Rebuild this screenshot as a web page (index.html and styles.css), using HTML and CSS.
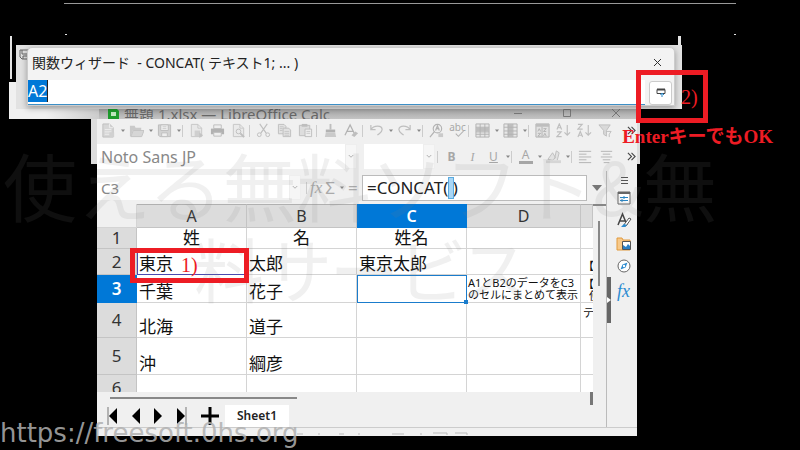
FILE: index.html
```html
<!DOCTYPE html>
<html lang="ja">
<head>
<meta charset="utf-8">
<title>関数ウィザード - LibreOffice Calc</title>
<link rel="stylesheet" href="styles.css">
</head>
<body>
<svg class="defs" aria-hidden="true">
  <symbol id="new" viewBox="0 0 16 16"><path d="M2 1h7l4 4v10H2z" fill="#ccc" stroke="#aaa"/><path d="M9 1v4h4M4 7h7M4 9.500h7M4 12h5" stroke="#eee" fill="none"/><path d="M9 10h5v5H9z" fill="#c4c4c4"/></symbol>
  <symbol id="open" viewBox="0 0 16 16"><path d="M1 3h5l1 2h6v3H4l-2 6H1z" fill="#bbb"/><path d="M4.500 8H16l-2.500 6.500H2z" fill="#ccc" stroke="#b0b0b0"/></symbol>
  <symbol id="save" viewBox="0 0 16 16"><path d="M1.500 2h13v12.500H3L1.500 13z" fill="#c6c6c6" stroke="#a6a6a6"/><path d="M4 2h8v6H4zM5 10.500h6v4H5z" fill="#eee" stroke="#aaa"/><path d="M6 4h4M6 6h4" stroke="#bbb"/></symbol>
  <symbol id="export" viewBox="0 0 16 16"><path d="M2.500 1.500h7l4 4v9h-11zM9.500 1.500v4h4" fill="#e6e6e6" stroke="#b5b5b5"/><path d="M6 8h6v6H6z" fill="#c2c2c2"/><path d="M11 10l4 3-4 3z" fill="#b0b0b0"/></symbol>
  <symbol id="print" viewBox="0 0 16 16"><path d="M4 2h8v4H4z" fill="#eee" stroke="#aaa"/><path d="M1 6h14v6H1z" fill="#999"/><path d="M4 10h8v4H4z" fill="#eee" stroke="#aaa"/></symbol>
  <symbol id="preview" viewBox="0 0 16 16"><path d="M2.500 1.500h7l4 4v9h-11zM9.500 1.500v4h4" fill="#e8e8e8" stroke="#b5b5b5"/><circle cx="8" cy="9" r="2.500" fill="none" stroke="#aaa"/><path d="M10 11l4 4" stroke="#aaa" stroke-width="2"/></symbol>
  <symbol id="cut" viewBox="0 0 16 16"><path d="M4 1l7 10M12 1L5 11" stroke="#aaa" stroke-width="1.200"/><circle cx="3.500" cy="12.500" r="2" fill="none" stroke="#aaa"/><circle cx="12.500" cy="12.500" r="2" fill="none" stroke="#aaa"/></symbol>
  <symbol id="copy" viewBox="0 0 16 16"><path d="M1.500 1.500h6l2 2v8h-8z" fill="#ddd" stroke="#aaa"/><path d="M6.500 5.500h6l2 2v7h-8z" fill="#ddd" stroke="#aaa"/><path d="M8 9h5M8 11h5M8 13h5M3 4h4M3 6h3M3 8h3" stroke="#b4b4b4"/></symbol>
  <symbol id="paste" viewBox="0 0 16 16"><path d="M1.500 2.500h11v11h-11z" fill="#d5d5d5" stroke="#aaa"/><path d="M4 1h6v3H4z" fill="#aaa"/><path d="M7.500 6.500h7v8h-7z" fill="#eee" stroke="#aaa"/><path d="M9 9h4M9 11h4" stroke="#bbb"/></symbol>
  <symbol id="brush" viewBox="0 0 16 16"><path d="M7 1h2v6H7z" fill="#aaa"/><path d="M3 7h10v3H3z" fill="#999"/><path d="M3 10h10l1 5H2z" fill="#bbb"/></symbol>
  <symbol id="clear" viewBox="0 0 16 16"><path d="M1 13L6.500 2 12 13M3 9h7" fill="none" stroke="#999" stroke-width="1.300"/><path d="M8 13l4-4 3 2-4 4z" fill="#aaa"/></symbol>
  <symbol id="undo" viewBox="0 0 16 16"><path d="M2 2v5h5M2 7c3-5 12-5 12 0 0 3-3 4-5 6" fill="none" stroke="#aaa" stroke-width="1.300"/></symbol>
  <symbol id="redo" viewBox="0 0 16 16"><path d="M14 2v5H9M14 7C11 2 2 2 2 7c0 3 3 4 5 6" fill="none" stroke="#aaa" stroke-width="1.300"/></symbol>
  <symbol id="find" viewBox="0 0 16 16"><circle cx="9" cy="6" r="4.500" fill="none" stroke="#999" stroke-width="1.200"/><path d="M6 9l-5 6M7 8l2-5 2 5M8 6h3" fill="none" stroke="#999" stroke-width="1.300"/><path d="M10 11h5v4h-5z" fill="#bbb"/></symbol>
  <symbol id="check" viewBox="0 0 16 8"><path d="M6 3l3 3 6-6" fill="none" stroke="#999" stroke-width="1.200"/></symbol>
  <symbol id="rows" viewBox="0 0 16 16"><path d="M1 1h14v14H1z" fill="#e4e4e4" stroke="#999"/><path d="M1 5h14v4H1z" fill="#aaa"/><path d="M1 4.500h14M1 9.500h14M1 12h14M5.500 1v14M10.500 1v14" stroke="#999"/></symbol>
  <symbol id="cols" viewBox="0 0 16 16"><path d="M1 1h14v14H1z" fill="#e4e4e4" stroke="#999"/><path d="M5 1h5v14H5z" fill="#aaa"/><path d="M1 4.500h14M1 8.500h14M1 12h14M5.500 1v14M10.500 1v14" stroke="#999"/></symbol>
  <symbol id="sort" viewBox="0 0 16 16"><path d="M1 1h14v14H1z" fill="#ddd" stroke="#999"/><path d="M1 1h14v3H1z" fill="#aaa"/><path d="M3 9l1.500-3L6 9M9 6h3L9 9h3M3 11h3l-3 3h3M9 14l1.500-3 1.500 3M7.500 4v11" fill="none" stroke="#999"/></symbol>
  <symbol id="az" viewBox="0 0 16 16"><path d="M1 7l2.500-6L6 7M2 5h3M1 9.500h4.500l-4.500 5H6M12 2v11M9 10l3 3 3-3" fill="none" stroke="#aaa" stroke-width="1.200"/></symbol>
  <symbol id="za" viewBox="0 0 16 16"><path d="M1 1.500h4.500L1 6.500H6M1 15l2.500-6L6 15M2 13h3M12 2v11M9 10l3 3 3-3" fill="none" stroke="#aaa" stroke-width="1.200"/></symbol>
  <symbol id="filter" viewBox="0 0 16 16"><path d="M1 2h12L9 8v6l-3-2V8z" fill="#d0d0d0" stroke="#aaa"/><path d="M9 9h5l-2 3v3" fill="none" stroke="#aaa"/></symbol>
  <symbol id="fill" viewBox="0 0 16 16"><path d="M2 11l5-7 3 5-3 3zM9 11l2-9 3 2-2 8" fill="#ddd" stroke="#aaa"/><path d="M0 12h16v3H0z" fill="#ccc"/></symbol>
  <symbol id="left" viewBox="0 0 16 16"><path d="M1 2.500h13M1 5.500h8M1 8.500h13M1 11.500h8M1 14.500h13" stroke="#999"/></symbol>
  <symbol id="center" viewBox="0 0 16 16"><path d="M2 2.500h12M4 5.500h8M2 8.500h12M4 11.500h8M5 14.500h6" stroke="#999"/></symbol>
  <symbol id="more" viewBox="0 0 10 10"><path d="M1 1l4 4-4 4M5 1l4 4-4 4" fill="none" stroke="#444" stroke-width="1.200"/></symbol>
  <symbol id="drop" viewBox="0 0 6 4"><path d="M1 0.500h4L3 3z" fill="#888"/></symbol>
  <symbol id="chev" viewBox="0 0 8 6"><path d="M1 1l3 3 3-3" fill="none" stroke="#999"/></symbol>
</svg>

<div class="stage">
  <div class="ghost rule"></div>
  <div class="ghost dot-left"></div>
  <div class="ghost dot-right"></div>
  <div class="ghost edge-left"></div>
  <div class="ghost edge-right"></div>
  <div class="ghost pane-left"></div>
  <div class="ghost pane-back"><svg width="12" height="14" viewBox="0 0 12 14"><path d="M1 3h10v9H3l-2-2zM3 3v4h6V3M4 12V9h4" fill="none" stroke="#666"/></svg></div>
  <div class="ghost strip-left"></div>
  <div class="ghost strip-right"></div>

  <main class="calc">
    <header class="titlebar">
      <svg width="11" height="12" viewBox="0 0 11 12"><path d="M0 0h7l4 4v8H0z" fill="#1e9b2d"/><path d="M3 5h5v4H3z" fill="#bfe8bf"/></svg>
      <h1>無題 1.xlsx — LibreOffice Calc</h1>
      <div class="winbtns">
        <button aria-label="最小化"><svg width="10" height="10"><path d="M1 5.500h8" stroke="#777"/></svg></button>
        <button aria-label="最大化"><svg width="10" height="10"><path d="M1.500 1.500h7v7h-7z" fill="none" stroke="#777"/></svg></button>
        <button aria-label="閉じる"><svg width="10" height="10"><path d="M1 1l8 8M9 1L1 9" stroke="#777"/></svg></button>
      </div>
    </header>

    <div class="bar">
      <button class="i" aria-label="新規"><svg><use href="#new"/></svg></button><button class="d" aria-label="新規の種類"><svg><use href="#drop"/></svg></button>
      <button class="i" aria-label="開く"><svg><use href="#open"/></svg></button><button class="d" aria-label="最近のファイル"><svg><use href="#drop"/></svg></button>
      <button class="i" aria-label="保存"><svg><use href="#save"/></svg></button><button class="d" aria-label="保存の種類"><svg><use href="#drop"/></svg></button>
      <span class="s"></span>
      <button class="i" aria-label="エクスポート"><svg><use href="#export"/></svg></button>
      <button class="i" aria-label="印刷"><svg><use href="#print"/></svg></button>
      <button class="i" aria-label="印刷プレビュー"><svg><use href="#preview"/></svg></button>
      <span class="s"></span>
      <button class="i" aria-label="切り取り"><svg><use href="#cut"/></svg></button>
      <button class="i" aria-label="コピー"><svg><use href="#copy"/></svg></button>
      <button class="i" aria-label="貼り付け"><svg><use href="#paste"/></svg></button>
      <span class="s"></span>
      <button class="i" aria-label="書式のコピー"><svg><use href="#brush"/></svg></button>
      <button class="i" aria-label="書式のクリア"><svg><use href="#clear"/></svg></button>
      <span class="s"></span>
      <button class="i" aria-label="元に戻す"><svg><use href="#undo"/></svg></button><button class="d" aria-label="履歴"><svg><use href="#drop"/></svg></button>
      <button class="i" aria-label="やり直し"><svg><use href="#redo"/></svg></button><button class="d" aria-label="やり直し履歴"><svg><use href="#drop"/></svg></button>
      <span class="s"></span>
      <button class="i" aria-label="検索と置換"><svg><use href="#find"/></svg></button>
      <button class="i abc">abc<svg><use href="#check"/></svg></button>
      <span class="s"></span>
      <button class="i" aria-label="行"><svg><use href="#rows"/></svg></button><button class="d" aria-label="行メニュー"><svg><use href="#drop"/></svg></button>
      <button class="i" aria-label="列"><svg><use href="#cols"/></svg></button><button class="d" aria-label="列メニュー"><svg><use href="#drop"/></svg></button>
      <span class="s"></span>
      <button class="i" aria-label="並べ替え"><svg><use href="#sort"/></svg></button>
      <button class="i" aria-label="昇順"><svg><use href="#az"/></svg></button>
      <button class="i" aria-label="降順"><svg><use href="#za"/></svg></button>
      <button class="i" aria-label="オートフィルター"><svg><use href="#filter"/></svg></button>
      <button class="more" aria-label="その他"><svg><use href="#more"/></svg></button>
    </div>

    <div class="bar format">
      <label class="combo font"><select aria-label="フォント名"><option>Noto Sans JP</option></select><svg><use href="#chev"/></svg></label>
      <label class="combo size"><select aria-label="フォントサイズ"><option></option></select><svg><use href="#chev"/></svg></label>
      <span class="s"></span>
      <button class="i b">B</button><button class="i it">I</button><button class="i u">U</button><button class="d" aria-label="下線"><svg><use href="#drop"/></svg></button>
      <span class="s"></span>
      <button class="i a"><span>A</span></button><button class="d" aria-label="文字色"><svg><use href="#drop"/></svg></button>
      <button class="i" aria-label="背景色"><svg><use href="#fill"/></svg></button><button class="d" aria-label="背景色メニュー"><svg><use href="#drop"/></svg></button>
      <span class="s"></span>
      <button class="i" aria-label="左揃え"><svg><use href="#left"/></svg></button>
      <button class="i" aria-label="中央揃え"><svg><use href="#center"/></svg></button>
      <button class="more" aria-label="その他"><svg><use href="#more"/></svg></button>
    </div>

    <div class="work">
      <div class="editor">
        <div class="formula">
          <label class="combo name"><select aria-label="名前ボックス"><option>C3</option></select><svg><use href="#chev"/></svg></label>
          <span class="s"></span>
          <div class="fns"><button class="fx">fx</button><button>Σ</button><button class="d" aria-label="関数の選択"><svg><use href="#drop"/></svg></button><button>=</button></div>
          <label class="input"><input aria-label="数式" value="=CONCAT( )"><span class="caret"></span></label>
          <button class="expand" aria-label="展開"><svg width="10" height="6"><path d="M0 0h10L5 6z" fill="#777"/></svg></button>
        </div>
        <div class="sheet">
          <table>
            <colgroup><col class="head"><col class="c"><col class="c"><col class="c"><col><col class="last"></colgroup>
            <tr class="letters"><td></td><th>A</th><th>B</th><th class="on">C</th><th>D</th><th></th></tr>
            <tr class="r1"><th>1</th><td class="mid">姓</td><td class="mid">名</td><td class="mid">姓名</td><td></td><td></td></tr>
            <tr class="r2"><th>2</th><td class="ref">東京</td><td>太郎</td><td>東京太郎</td><td></td><td><div class="cut">【</div></td></tr>
            <tr class="r3"><th class="on">3</th><td>千葉</td><td>花子</td><td class="cur"></td><td class="note">A1とB2のデータをC3<br>のセルにまとめて表示</td><td><div class="cut">【<span>使</span></div></td></tr>
            <tr class="r4"><th>4</th><td>北海</td><td>道子</td><td></td><td></td><td class="top"><div class="cut te">テ</div></td></tr>
            <tr class="r5"><th>5</th><td>沖</td><td>綱彦</td><td></td><td></td><td></td></tr>
            <tr class="r6"><th><div>6</div></th><td></td><td></td><td></td><td></td><td></td></tr>
          </table>
          <div class="vscroll"><i></i></div>
        </div>
        <div class="hscroll"><i></i><b></b></div>
        <div class="tabs">
          <button aria-label="最初のシート"><svg width="11" height="18"><path d="M1 0v18" stroke="#777"/><path d="M10 1v16L2 9z"/></svg></button>
          <button aria-label="前のシート"><svg width="11" height="18"><path d="M10 1v16L2 9z"/></svg></button>
          <button aria-label="次のシート"><svg width="11" height="18"><path d="M1 1v16l8-8z"/></svg></button>
          <button aria-label="最後のシート"><svg width="11" height="18"><path d="M10 0v18" stroke="#777"/><path d="M1 1v16l8-8z"/></svg></button>
          <button class="add" aria-label="シートの追加"><svg width="18" height="18"><path d="M9 0v18M0 9h18" stroke="#000" stroke-width="3"/></svg></button>
          <a class="tab" href="#sheet1">Sheet1</a>
        </div>
      </div>
      <aside>
        <svg width="10" height="8"><path d="M2 1.500h7M2 4.500h7M2 7.500h7" stroke="#555"/></svg>
        <svg width="14" height="14"><path d="M1 1h12v12H1z" fill="#fff" stroke="#666"/><path d="M1 2h12" stroke="#666" stroke-width="2"/><path d="M3 6.500h8M3 9.500h8" stroke="#2684c4"/><path d="M7 5v3M5 8v3" stroke="#2684c4"/></svg>
        <svg width="16" height="16"><path d="M2 13L6.500 2 11 13M3.500 9h6" fill="none" stroke="#444" stroke-width="1.500"/><path d="M7 14l6-8 2 1-5 7z" fill="#fff" stroke="#555"/><path d="M5 15l3-3 3 1-2 2z" fill="#2b8bd0"/></svg>
        <svg width="16" height="16"><path d="M1 3h5l1 2h7v10H1z" fill="#f7c98a" stroke="#e29a3d"/><path d="M6.500 6.500h8v8h-8z" fill="#fff" stroke="#555"/><path d="M7 14v-4l3 2 2-3 2 2v3z" fill="#2b7fc4"/></svg>
        <svg width="16" height="16"><circle cx="8" cy="8" r="6" fill="#fff" stroke="#666"/><path d="M11.500 4.500L9.500 9.500l-5 2 2-5z" fill="#2b8bd0"/><circle cx="8" cy="8" r="1.200" fill="#fff"/></svg>
        <span class="sidefx">fx</span>
        <div class="handle"><svg width="4" height="6"><path d="M0 0l4 3-4 3z" fill="#fff"/></svg></div>
      </aside>
    </div>
    <footer><svg width="180" height="3"><path d="M0 2h6M22 1v2M42 2h5M62 1v2M95 2h12M124 1v2M136 1h14v2M158 1h12v2" fill="none" stroke="#bbb"/></svg></footer>
  </main>

  <section class="dialog">
    <header><h2>関数ウィザード&nbsp; - CONCAT( テキスト1; ... )</h2><button aria-label="閉じる"><svg width="9" height="9"><path d="M1 1l7 7M8 1L1 8" stroke="#333"/></svg></button></header>
    <div class="row">
      <div class="field"><mark>A2</mark></div>
      <button class="shrink" aria-label="拡大"><svg width="10" height="10"><path d="M1 1.500h8v4H1z" fill="#fff" stroke="#444"/><path d="M1 1.500h8" stroke="#444" stroke-width="2"/><path d="M6 9V6M4.500 7L6 5l2 2" fill="none" stroke="#2684c4"/></svg></button>
    </div>
  </section>

  <div class="watermark"><p>使える無料ソフト&amp;無</p><p class="second">料サービス</p></div>
  <div class="callout cell"><span>1)</span></div>
  <div class="callout wizard"><span>2)</span></div>
  <p class="enter">EnterキーでもOK</p>
  <p class="url">https://freesoft.0hs.org</p>
</div>
</body>
</html>
```
FILE: styles.css
```css
* { box-sizing: border-box; }
body { margin: 0; background: #000; color: #222; font: 17px/22px "Noto Sans", "Noto Sans CJK JP", sans-serif; }
h1, h2, p { margin: 0; font-weight: 400; }
button { display: flex; align-items: center; justify-content: center; padding: 0; border: 0; background: none; font: inherit; color: inherit; }
.defs { position: absolute; width: 0; height: 0; }
.stage { position: relative; min-height: 100vh; padding: 106px 163px 14px 97px; overflow: hidden; }

/* Remains of the windows behind */
.ghost { position: absolute; background: #e4e4e4; }
.rule { top: 3px; left: 64px; right: 64px; height: 1px; background: #999; }
.dot-left { top: 34px; left: 65px; width: 2px; height: 1px; }
.dot-right { top: 34px; right: 64px; width: 2px; height: 1px; }
.edge-left { top: 36px; left: 10px; width: 2px; height: 43px; }
.edge-right { top: 36px; right: 119px; width: 3px; height: 10px; }
.pane-left { top: 82px; left: 9px; width: 90px; height: 37px; background: linear-gradient(90deg, #f0f0f0 40%, #ccc); }
.pane-back { top: 45px; left: 16px; right: 118px; height: 64px; background: #e2e2e2; }
.pane-back svg { display: block; margin: 2px 3px; }
.strip-left { top: 119px; left: 91px; width: 6px; height: 45px; background: #ddd; }
.strip-right { top: 119px; right: 160px; width: 3px; height: 45px; background: #ddd; }

/* Spreadsheet window */
.calc { background: #f0f0f0; }
.titlebar { display: flex; align-items: center; height: 13px; padding-left: 11px; background: linear-gradient(#999, #c4c4c4); overflow: hidden; }
.titlebar h1 { margin-left: 5px; padding-top: 2px; font-size: 15px; line-height: 14px; color: #666; white-space: nowrap; }
.winbtns { display: flex; gap: 39px; margin-left: auto; padding-right: 16px; }
.bar { display: flex; align-items: center; height: 23px; padding: 0 1px; }
.i { flex: none; width: 21px; height: 20px; color: #888; font-size: 12px; opacity: .7; }
.i svg { width: 15px; height: 15px; }
.d { flex: none; width: 7px; height: 20px; }
.d svg { width: 6px; height: 4px; }
.s { flex: none; width: 4px; height: 12px; border-left: 1px solid #ccc; }
.more { margin-left: auto; }
.more svg { width: 9px; height: 9px; }
.abc { flex-direction: column; font-size: 10px; line-height: 8px; }
.i.abc svg { height: 7px; }
.format { height: 29px; padding-left: 0; }
.combo { display: flex; align-items: center; height: 25px; background: #fff; }
.combo select { flex: 1; min-width: 0; height: 25px; padding: 0 4px; border: 0; background: none; appearance: none; font: inherit; color: #888; }
.combo svg { width: 12px; height: 25px; padding: 8px 2px; background: #f6f6f6; border: 1px solid #eee; }
.font { flex: 0 1 260px; font-size: 16px; }
.size { flex: 0 1 71px; margin: 0 2px 0 7px; }
.b { font-weight: 700; }
.it { font-family: "Liberation Serif", serif; font-style: italic; }
.u { text-decoration: underline; }
.a span { width: 14px; border-bottom: 3px solid #888; line-height: 12px; }

.work { display: grid; grid-template-columns: 1fr 31px; }
.formula { display: flex; align-items: center; height: 33px; }
.name { flex: 1; font-size: 15px; margin-right: 5px; }
.name select { color: #888; }
.fns { display: flex; align-items: center; width: 52px; gap: 3px; color: #aaa; }
.fx { font-family: "Liberation Serif", serif; font-style: italic; }
.input { position: relative; width: 225px; }
.input input { display: block; width: 100%; height: 26px; padding: 0 4px; border: 1px solid #bbb; border-radius: 0; font: inherit; font-size: 17px; color: #222; background: #fff; }
.caret { position: absolute; left: 86px; top: 2px; width: 6px; height: 22px; border: 1px solid #5aabe0; background: #a9d6f5; }
.expand { width: 19px; }

.sheet { display: flex; }
table { flex: 1; table-layout: fixed; width: 0; border-collapse: separate; border-spacing: 0; background: #fff; color: #111; }
.head { width: 40px; }
.c { width: 110px; }
.last { width: 12px; }
td, th { padding: 0; border-right: 1px solid #d4d4d4; border-bottom: 1px solid #d4d4d4; line-height: 20px; }
td { padding-left: 2px; vertical-align: bottom; white-space: nowrap; }
td:last-child { padding: 0; border-right: 0; }
th { background: #dcdcdc; border-color: #c4c4c4; font-weight: 400; color: #333; }
.letters { height: 24px; }
.letters td { background: #f0f0f0; }
.letters th { border-top: 1px solid #b0b0b0; font-size: 16px; }
th.on { background: #0078d7; border-color: #0078d7; color: #fff; font-weight: 600; }
.mid { text-align: center; padding: 0; }
.r1 { height: 21px; }
.r2 { height: 26px; }
.r3 { height: 28px; }
.r4 { height: 35px; }
.r5 { height: 37px; }
.r6 { height: 17px; }
.r6 div { height: 16px; overflow: hidden; line-height: 24px; }
.r6 th, .r6 td { border-bottom: 0; }
.ref { border-bottom: 1px solid #4a4ab0; border-left: 1px solid #4a4ab0; padding-left: 1px; }
td.cur { position: relative; border: 1px solid #1a7ccc; outline: 1px solid #1a7ccc; outline-offset: -1px; }
.cur::after { content: ""; position: absolute; right: -2px; bottom: -2px; width: 4px; height: 4px; background: #1a7ccc; }
td.note { padding-left: 1px; font-size: 11px; line-height: 12px; vertical-align: middle; }
.cut { height: 24px; overflow: hidden; padding-left: 2px; font-size: 11px; line-height: 12px; }
.cut span { display: block; padding-left: 6px; }
.r2 .cut { height: 14px; }
.top { vertical-align: top; }
.te { padding-top: 4px; }
.vscroll { width: 13px; background: #f0f0f0; border-top: 2px solid #888; }
.vscroll i { display: block; width: 2px; height: 65px; margin: 15px 0 0 5px; background: #888; }
.hscroll { display: flex; justify-content: space-between; height: 13px; padding: 0 13px; }
.hscroll i { width: 187px; height: 2px; margin-top: 5px; background: #888; }
.hscroll b { width: 3px; background: #777; }
.tabs { display: flex; align-items: center; height: 22px; gap: 12px; padding-left: 10px; }
.tabs svg { display: block; }
.add { margin: 0 -6px 0 2px; }
.tab { width: 64px; height: 22px; background: #fff; color: #222; font-size: 12px; font-weight: 600; text-align: center; text-decoration: none; }
aside { position: relative; display: flex; flex-direction: column; align-items: center; gap: 7px; padding: 5px 0 0 3px; border-left: 1px solid #bbb; }
.sidefx { font: italic 18px/20px "Liberation Serif", serif; color: #2b8bd0; }
.handle { position: absolute; left: 0; top: 106px; width: 4px; height: 46px; background: #666; display: flex; align-items: center; }
footer { height: 9px; border-top: 1px solid #ccc; padding: 4px 0 0 200px; }
footer svg { display: block; }

/* Function wizard */
.dialog { position: absolute; top: 47px; left: 27px; right: 125px; background: #f3f3f3; border: 1px solid #ccc; border-radius: 5px 5px 0 0; box-shadow: 0 2px 6px #0005; }
.dialog header { display: flex; align-items: center; justify-content: space-between; height: 32px; padding: 0 12px 3px 4px; }
.dialog h2 { font-size: 14px; white-space: nowrap; }
.row { display: flex; align-items: center; height: 25px; }
.field { flex: 1; height: 25px; background: #fff; border-bottom: 1px solid #3d8fc6; }
.field mark { display: inline-block; height: 22px; background: #0078d7; color: #fff; border-right: 1px solid #222; font-size: 16px; }
.shrink { width: 23px; height: 24px; margin: 0 2px 0 4px; background: #fff; border: 1px solid #ccc; border-radius: 3px; }

/* Annotations */
.callout { position: absolute; border: 5px solid #ed1c24; color: #ed1c24; font: 20px/24px "Liberation Serif", serif; }
.cell { top: 248px; left: 130px; width: 119px; height: 35px; padding-left: 46px; }
.wizard { top: 70px; right: 92px; width: 72px; height: 53px; padding: 10px 0 0 40px; }
.enter { position: absolute; top: 125px; right: 27px; color: #ed1c24; font: 700 19px/24px "Liberation Serif", "Noto Sans CJK JP", serif; }
.watermark { position: absolute; top: 142px; left: 0; right: 80px; color: #8080801e; font: 500 74px/84px "Noto Sans CJK JP", sans-serif; text-align: center; white-space: nowrap; pointer-events: none; }
.second { font-size: 70px; font-feature-settings: "palt"; }
.url { position: absolute; top: 418px; left: 0; font: 26px/30px "DejaVu Sans", sans-serif; color: #b0b0b0dd; }
```
